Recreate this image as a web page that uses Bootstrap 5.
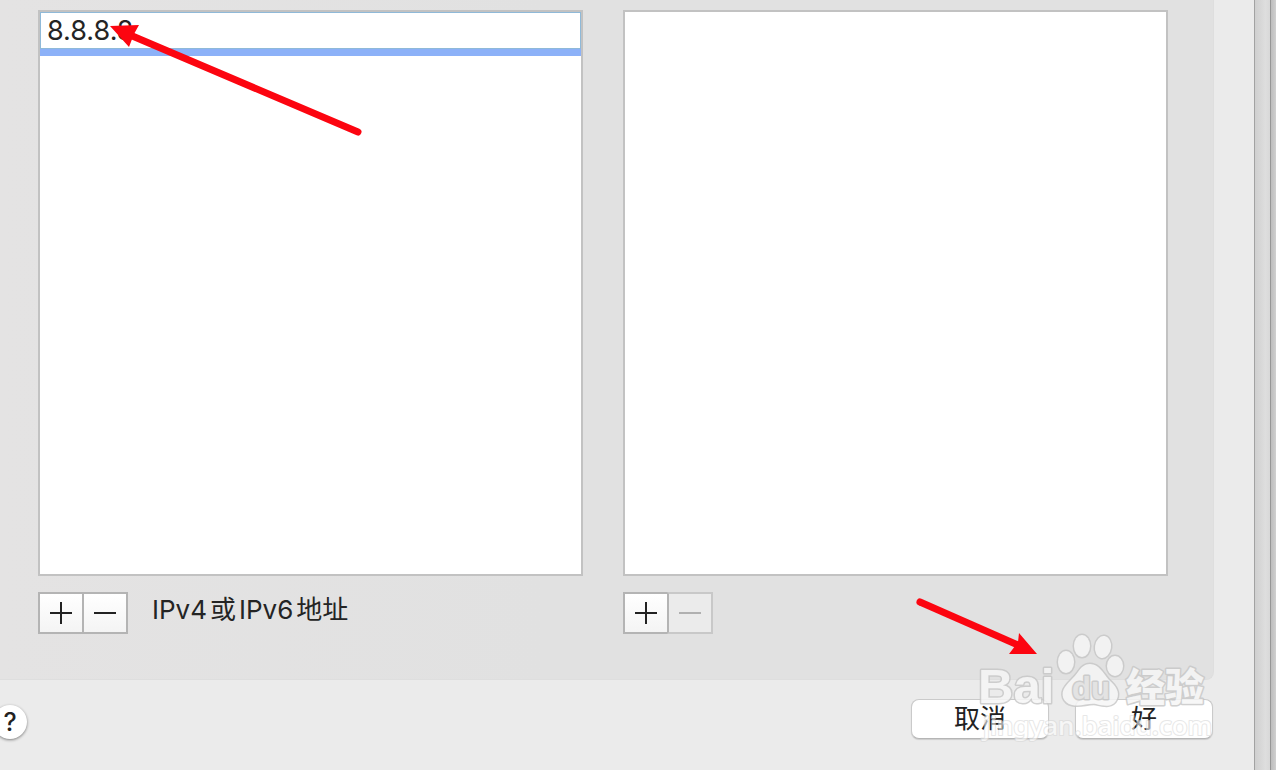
<!DOCTYPE html>
<html lang="zh-CN">
<head>
<meta charset="utf-8">
<meta name="viewport" content="width=device-width, initial-scale=1">
<title>DNS</title>
<link href="https://cdn.jsdelivr.net/npm/bootstrap@5.3.0/dist/css/bootstrap.min.css" rel="stylesheet">
<style>
  body { font-family: Inter, "Noto Sans CJK SC", sans-serif; font-size: 26px; line-height: 36px; color: #242424; background: #cfcfcf; }
  .backdrop { width: 16px; background: linear-gradient(90deg, #cfcfcf, #dedede 70%, #d8d8d8); border-right: 1px solid #969696; }
  .backdrop-edge { width: 5px; background: linear-gradient(90deg, #bdbdbd, #d0d0d0); }
  .sheet { background: #ebebeb; border-right: 1px solid #a2a2a2; }
  .dns-panel { margin-right: 40px; padding: 10px 45px 45px 38px; background: linear-gradient(90deg, #e4e3e3, #e1e1e1 45%); border: solid #dedede; border-width: 0 1px 1px 0; border-bottom-right-radius: 8px; }
  .columns { gap: 40px; }
  .column { flex: 1 1 0; gap: 16px; min-width: 0; }
  .entries { background: #fff; border: 2px solid #c2c2c2; }
  .entries li { border-bottom: 7px solid #8cb1f8; }
  .entries input { display: block; width: 100%; height: 37px; padding: 0 6px; border: 1px solid #8fb9d8; border-radius: 0; color: #242424; font-size: 27px; outline: 0; }
  .tool { width: 46px; height: 42px; padding: 0; background: linear-gradient(#fff, #f4f4f4); border: 2px solid #b4b4b4; color: #222; display: flex; align-items: center; justify-content: center; }
  .tool + .tool { margin-left: -2px; }
  .tool:disabled { background: #ebebeb; border-color: #c8c8c8; border-left-color: #b4b4b4; color: #b0b0b0; }
  .hint { margin-left: 24px; }
  .hint span { margin: 0 3px; }
  .actions { padding: 19px 41px 31px 0; gap: 26px; }
  .push { width: 138px; height: 40px; padding: 0; background: #fff; border: 1px solid #cacaca; border-bottom-color: #b5b5b5; border-radius: 8px; box-shadow: 0 1px 1px #0002; color: #222; }
  .help { width: 34px; height: 34px; margin-left: -7px; padding: 0; background: #fff; border: 0; border-radius: 50%; box-shadow: 0 1px 3px #0007; color: #222; font-size: 25px; line-height: 34px; font-weight: 500; }
  .overlay { position: absolute; pointer-events: none; }
  .at-entry { left: 100px; top: 15px; }
  .at-actions { right: 39px; bottom: 25px; }
  .arrow { fill: #fc0510; stroke: #fc0510; }
  .logo { fill: #f6f6f6; stroke: #c8c8c8; stroke-width: 3; stroke-linejoin: round; paint-order: stroke; opacity: .85; }
  .logo-word { font: bold 49px "Liberation Sans", Arial, sans-serif; }
  .logo-du { font: bold 31px "Liberation Sans", Arial, sans-serif; fill: #e2e2e2; }
  .logo-cjk { font: 900 39px "Noto Sans CJK SC", sans-serif; }
  .logo-url { font: 500 26px "Noto Sans", sans-serif; fill: #fff; stroke: #d8d8d8; stroke-width: 2; opacity: .7; }
</style>
</head>
<body>
<div class="d-flex min-vh-100">
  <main class="sheet position-relative d-flex flex-column flex-grow-1">
    <section class="dns-panel d-flex flex-column flex-grow-1">
      <div class="columns d-flex flex-grow-1">
        <div class="column d-flex flex-column">
          <ul class="entries list-unstyled mb-0 flex-grow-1">
            <li><input type="text" value="8.8.8.8" aria-label="DNS"></li>
          </ul>
          <div class="d-flex">
            <button class="tool" type="button" aria-label="+"><svg width="22" height="22" stroke="currentColor" stroke-width="2"><path d="M0 11H22M11 0V22"/></svg></button>
            <button class="tool" type="button" aria-label="−"><svg width="22" height="22" stroke="currentColor" stroke-width="2"><path d="M0 11H22"/></svg></button>
            <div class="hint">IPv4<span>或</span>IPv6<span>地址</span></div>
          </div>
        </div>
        <div class="column d-flex flex-column">
          <ul class="entries list-unstyled mb-0 flex-grow-1"></ul>
          <div class="d-flex">
            <button class="tool" type="button" aria-label="+"><svg width="22" height="22" stroke="currentColor" stroke-width="2"><path d="M0 11H22M11 0V22"/></svg></button>
            <button class="tool" type="button" aria-label="−" disabled><svg width="22" height="22" stroke="currentColor" stroke-width="2"><path d="M0 11H22"/></svg></button>
          </div>
        </div>
      </div>
    </section>
    <footer class="actions d-flex align-items-end">
      <button class="help me-auto" type="button">?</button>
      <button class="push" type="button">取消</button>
      <button class="push" type="button">好</button>
    </footer>

    <!-- arrow to the address field -->
    <svg class="overlay at-entry arrow" width="270" height="125" viewBox="100 15 270 125">
      <path d="M130 35L358 132" stroke-width="7" stroke-linecap="round"/>
      <path d="M110 26L139 25L134 34L129 47Z" stroke="none"/>
    </svg>
    <!-- arrow to the confirm button, watermark -->
    <svg class="overlay at-actions" width="310" height="150" viewBox="905 595 310 150">
      <g class="arrow">
        <path d="M920 602L1018 645" stroke-width="7" stroke-linecap="round"/>
        <path d="M1037 654L1019 633L1018 642L1009 654Z" stroke="none"/>
      </g>
      <g class="logo">
        <text class="logo-word" x="978" y="703">Bai</text>
        <ellipse cx="1066" cy="662" rx="8" ry="11"/>
        <ellipse cx="1082" cy="646" rx="8" ry="11"/>
        <ellipse cx="1103" cy="647" rx="8" ry="11" transform="rotate(8 1103 647)"/>
        <ellipse cx="1115" cy="666" rx="8" ry="10"/>
        <path d="M1090 664C1099 664 1103 673 1109 680C1116 686 1120 692 1117 699C1113 708 1104 706 1096 704C1088 703 1081 707 1072 705C1063 703 1060 694 1065 687C1069 681 1074 678 1078 672C1081 667 1085 664 1090 664Z"/>
        <text class="logo-du" x="1072" y="699">du</text>
        <text class="logo-cjk" x="1126" y="701">经验</text>
        <text class="logo-url" x="983" y="735">jingyan.baidu.com</text>
      </g>
    </svg>
  </main>
  <div class="backdrop"></div>
  <div class="backdrop-edge"></div>
</div>
<script src="https://cdn.jsdelivr.net/npm/bootstrap@5.3.0/dist/js/bootstrap.bundle.min.js"></script>
</body>
</html>
